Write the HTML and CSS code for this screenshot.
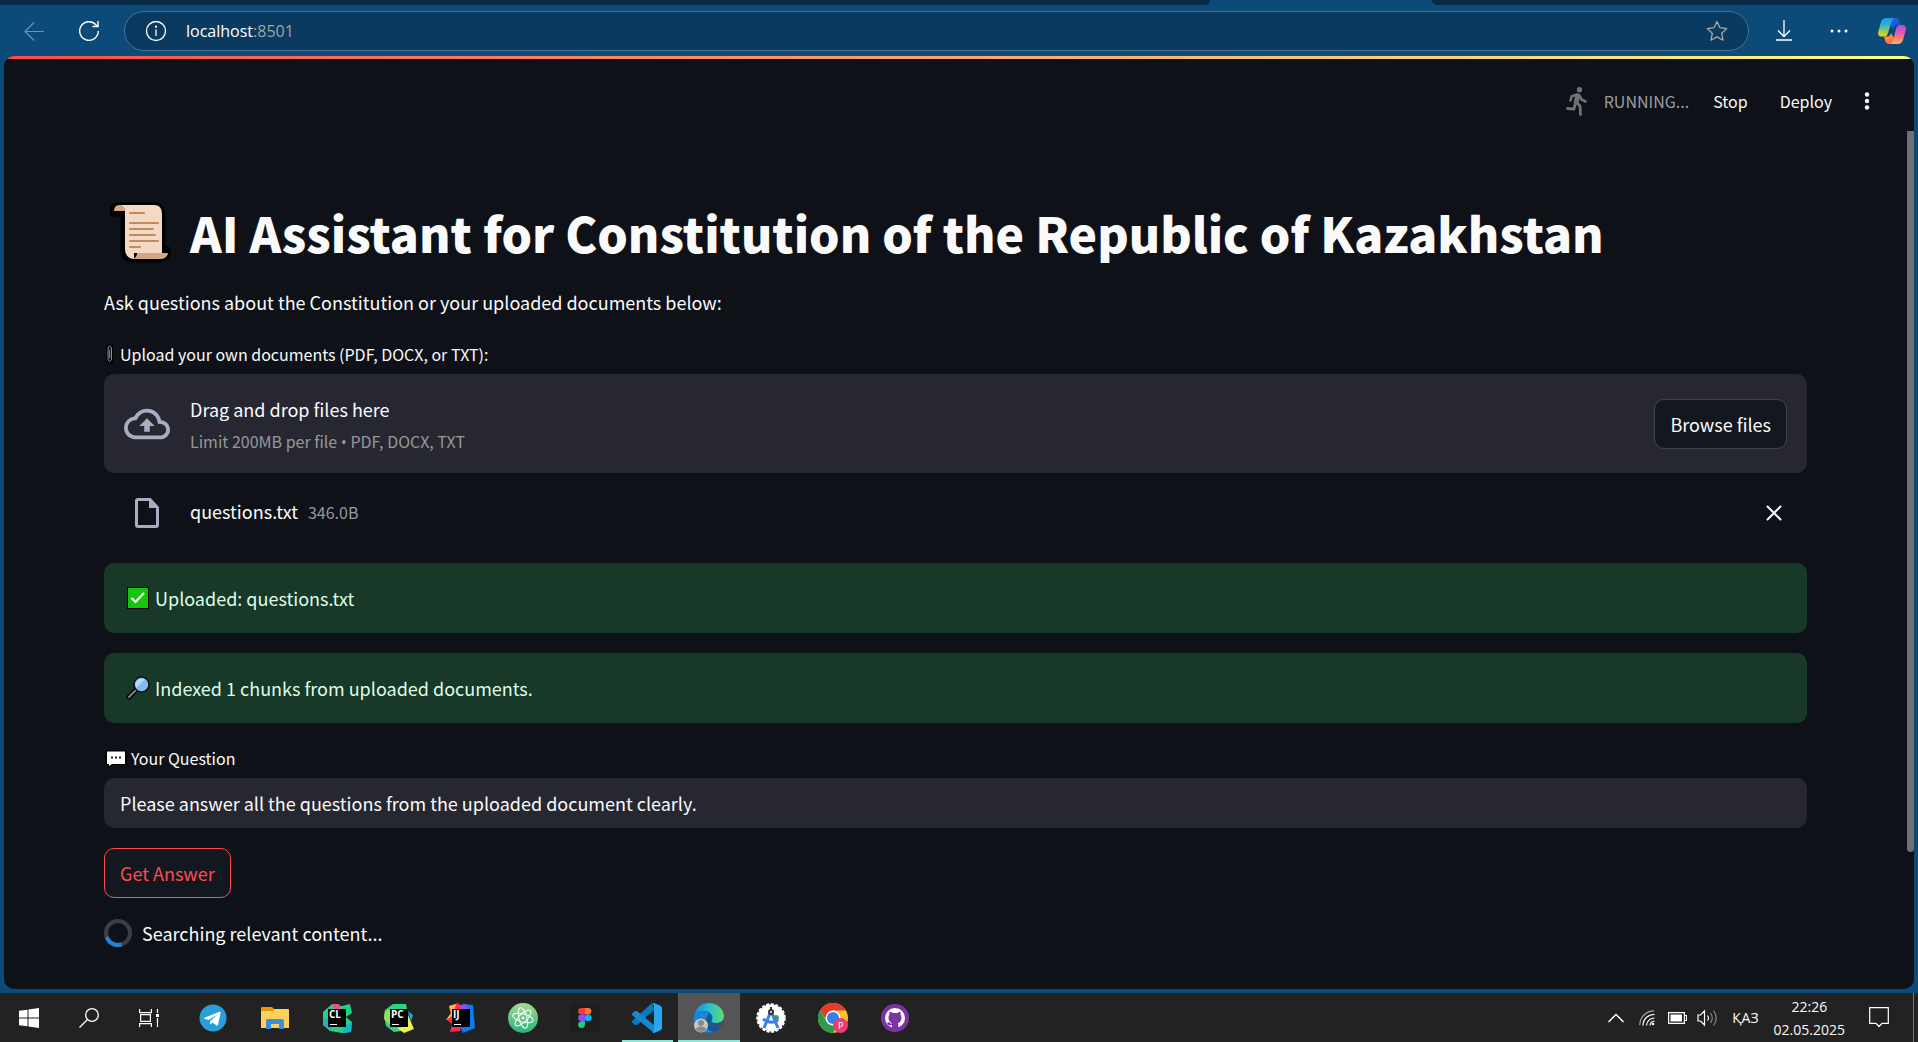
FILE: index.html
```html
<!DOCTYPE html>
<html lang="en">
<head>
<meta charset="utf-8">
<meta name="viewport" content="width=device-width, initial-scale=1">
<title>AI Assistant for Constitution of the Republic of Kazakhstan</title>
<link rel="stylesheet" href="styles.css">
</head>
<body>
<div class="tabstrip"><span class="tabs-left"></span><span class="tab-active"></span><span class="tabs-right"></span></div>
<nav class="toolbar" aria-label="Browser">
  <button class="icon-btn back" aria-label="Back"><svg width="20" height="20" viewBox="0 0 20 20" fill="none" stroke="#6e93b1" stroke-width="1.2"><path d="M20 10.500H1M10 1.500L1 10.500L10 19.500"/></svg></button>
  <button class="icon-btn reload" aria-label="Reload"><svg width="22" height="22" viewBox="0 0 22 22" fill="none" stroke="#fff" stroke-width="1.400"><path d="M20.300 11A9.300 9.300 0 1 1 17.800 4.700L20 6.500M20 1V6.500H14.500"/></svg></button>
  <div class="address">
    <svg width="22" height="22" viewBox="0 0 22 22" fill="none" stroke="#fff" stroke-width="1.300"><circle cx="11" cy="11" r="9.500"/><path d="M11 9.500V16"/><circle cx="11" cy="6.700" r=".5" fill="#fff"/></svg>
    <span class="url">localhost<span class="port">:8501</span></span>
    <button class="icon-btn star" aria-label="Add to favorites"><svg width="22" height="22" viewBox="0 0 22 22" fill="none" stroke="#a7a9aa" stroke-width="1.300" stroke-linejoin="round"><path d="M11 1.500L13.900 7.700L20.700 8.600L15.700 13.300L17 20.200L11 16.900L5 20.200L6.300 13.300L1.300 8.600L8.100 7.700Z"/></svg></button>
  </div>
  <button class="icon-btn download" aria-label="Downloads"><svg width="16" height="21" viewBox="0 0 16 21" fill="none" stroke="#fff" stroke-width="1.300"><path d="M8 0V16.500M2 10.500L8 16.500L14 10.500M0 20H16"/></svg></button>
  <button class="icon-btn more" aria-label="More"><svg width="18" height="4" viewBox="0 0 18 4" fill="#fff"><circle cx="2" cy="2" r="1.500"/><circle cx="9" cy="2" r="1.500"/><circle cx="16" cy="2" r="1.500"/></svg></button>
  <button class="icon-btn copilot" aria-label="Copilot"><svg width="28" height="26" viewBox="0 0 28 26">
    <defs>
      <linearGradient id="cpa" x1="0" y1="0" x2="0" y2="1"><stop offset="0" stop-color="#1b9bf0"/><stop offset=".4" stop-color="#35b5c5"/><stop offset=".75" stop-color="#a3cf45"/><stop offset="1" stop-color="#ffd000"/></linearGradient>
      <linearGradient id="cpb" x1="0" y1="0" x2="0" y2="1"><stop offset="0" stop-color="#a24df0"/><stop offset=".45" stop-color="#f25a9c"/><stop offset="1" stop-color="#ffb05a"/></linearGradient>
      <linearGradient id="cpc" x1="0" y1="0" x2="1" y2="1"><stop offset="0" stop-color="#1180e5"/><stop offset="1" stop-color="#2342cf"/></linearGradient>
      <linearGradient id="cpd" x1="0" y1="0" x2="1" y2="1"><stop offset="0" stop-color="#ffb02a"/><stop offset="1" stop-color="#ff4b4b"/></linearGradient>
    </defs>
    <path fill="url(#cpc)" d="M8 0H17Q20 0 21 3L22 7H19Q16 7 15 11Z"/>
    <path fill="url(#cpd)" d="M20 26H11Q8 26 7 22L6 18.500H9Q12 18.500 13 15Z"/>
    <path fill="url(#cpa)" d="M8 0H16Q14 1 13 5L10 15Q9 18.500 6 18.500H3Q-.5 18.500 .2 14L3 4Q4.500 0 8 0Z"/>
    <path fill="url(#cpb)" d="M22 7H25Q28.500 7.500 27.800 12L25 22Q23.500 26 20 26H12.500Q14.500 25 15.500 21L18 11Q19 7 22 7Z"/>
  </svg></button>
</nav>

<div class="viewport">
  <div class="decoration"></div>
  <header class="app-header">
    <div class="status">
      <svg width="21" height="29" viewBox="0 0 21 29" fill="none" stroke="#707276" stroke-linecap="round" stroke-linejoin="round"><circle cx="13.500" cy="2.700" r="2.700" fill="#707276" stroke="none"/><path stroke-width="2.600" d="M11 7.500L5.500 9.500L4.500 13.500M13 8L15.500 12.500L19.500 14.500"/><path stroke-width="5" d="M11.700 9L10.300 15"/><path stroke-width="2.800" d="M9.500 15.500L8 22L1.500 21.500M10 15L14 19L14.500 27.500"/></svg>
      <span class="running">RUNNING...</span>
    </div>
    <button class="text-btn stop">Stop</button>
    <button class="text-btn deploy">Deploy</button>
    <button class="icon-btn menu" aria-label="Main menu"><svg width="6" height="18" viewBox="0 0 6 18" fill="#fafafa"><circle cx="3" cy="2.500" r="2.200"/><circle cx="3" cy="9" r="2.200"/><circle cx="3" cy="15.500" r="2.200"/></svg></button>
  </header>
  <div class="scrollbar" aria-hidden="true"></div>

  <main class="content">
    <h1>
      <svg width="62" height="62" viewBox="0 0 62 62"><path d="M9 5H43Q52 5 52 14V49H57Q58 56 50 58H23Q14 58 14 49V12H3Q2 5 9 5Z" stroke="#000" stroke-width="7" stroke-linejoin="round"/><path fill="#f6d9c5" d="M8 4H44Q52 4 52 13V52H24V58Q15 57 15 48V10Q14 4 8 4Z"/><path fill="#d3a783" d="M4 10Q4 4 9.500 4Q15 5 15 10ZM27 52H58Q57 58 50 58H22Q27 57 27 52Z"/><path stroke="#bd8c5f" stroke-width="2" stroke-linecap="round" d="M20 12H34M20 22H48M20 28H43M20 34H45M20 40H48M20 46H30"/></svg>
      <span>AI Assistant for Constitution of the Republic of Kazakhstan</span>
    </h1>
    <p class="intro">Ask questions about the Constitution or your uploaded documents below:</p>

    <section class="uploader">
      <label class="field-label" for="browse">
        <svg width="16" height="20" viewBox="0 0 16 20" fill="none"><rect x="3" y="1" width="5" height="18" rx="2.500" stroke="#000" stroke-width="2"/><path d="M4 7V16Q5.500 19 7.500 16V4Q5.500 0 4 4V7M5.700 6V14" stroke="#8b8b8f"/></svg>
        <span>Upload your own documents (PDF, DOCX, or TXT):</span>
      </label>
      <div class="dropzone">
        <svg class="cloud" width="46" height="46" viewBox="0 0 24 24" fill="#a9adc1"><path d="M19.350 10.040A7.490 7.490 0 0 0 12 4C9.110 4 6.600 5.640 5.350 8.040A5.994 5.994 0 0 0 0 14c0 3.310 2.690 6 6 6h13c2.760 0 5-2.240 5-5 0-2.640-2.050-4.780-4.650-4.960zM19 18H6c-2.210 0-4-1.790-4-4 0-2.050 1.530-3.760 3.560-3.970l1.070-.11.5-.95A5.469 5.469 0 0 1 12 6c2.620 0 4.880 1.860 5.390 4.430l.3 1.500 1.530.11A2.980 2.980 0 0 1 22 15c0 1.650-1.350 3-3 3zM8 13h2.550v3h2.900v-3H16l-4-4z"/></svg>
        <div class="drop-text"><span>Drag and drop files here</span><small>Limit 200MB per file <span class="bullet">•</span> PDF, DOCX, TXT</small></div>
        <button class="btn" id="browse">Browse files</button>
      </div>
      <div class="file">
        <span class="file-icon"><svg width="24" height="30" viewBox="0 0 24 30" fill="none"><path d="M3 1.500H15L22.500 9.500V27Q22.500 28.500 21 28.500H3Q1.500 28.500 1.500 27V3Q1.500 1.500 3 1.500Z" stroke="#a9adc1" stroke-width="3"/><path fill="#a9adc1" d="M14 1L23 10H14Z"/></svg></span>
        <div class="file-name"><span>questions.txt</span><small>346.0B</small></div>
        <button class="icon-btn close" aria-label="Remove file"><svg width="16" height="16" viewBox="0 0 16 16" stroke="#fafafa" stroke-width="2" stroke-linecap="round"><path d="M1.500 1.500L14.500 14.500M14.500 1.500L1.500 14.500"/></svg></button>
      </div>
    </section>

    <div class="alert" role="status"><svg width="24" height="24" viewBox="0 0 24 24"><path d="M1 1H23V23H1Z" fill="#000"/><path fill="#16c60c" d="M2 2H22V22H2Z"/><path d="M5.500 12L9.500 16L18 7" fill="none" stroke="#fff" stroke-width="2.200"/></svg><span>Uploaded: questions.txt</span></div>
    <div class="alert" role="status"><svg width="24" height="24" viewBox="0 0 24 24" fill="none" stroke-linecap="round"><path d="M3 21L10.500 13.500" stroke="#000" stroke-width="5"/><path d="M3 21L10.500 13.500" stroke="#7c7f83" stroke-width="2.200"/><circle cx="15.500" cy="8.500" r="7.500" fill="#82bceb" stroke="#101216" stroke-width="1.600"/><path d="M10.500 12A6 6 0 0 1 18.500 3.500Z" fill="#b5daf5"/></svg><span>Indexed 1 chunks from uploaded documents.</span></div>

    <div class="question">
      <label class="field-label" for="question"><svg class="bubble" width="24" height="20" viewBox="0 0 24 20"><path fill="#000" d="M1 2H23V17H9L4 20V17H1Z"/><path fill="#fff" d="M3 3.500H21V16H8L5 18V16H3Z"/><path stroke="#222" stroke-width="2" stroke-dasharray="2 2" d="M7 9.500H17"/></svg><span>Your Question</span></label>
      <input id="question" type="text" value="Please answer all the questions from the uploaded document clearly.">
    </div>
    <button class="btn primary">Get Answer</button>
    <div class="searching"><svg width="28" height="28" viewBox="0 0 28 28" fill="none" stroke-width="4"><circle cx="14" cy="14" r="12" stroke="#3c3e43"/><path d="M2.600 18A12 12 0 0 0 17.500 25.500" stroke="#1c83e1"/></svg><span>Searching relevant content...</span></div>
  </main>
</div>

<footer class="taskbar">
  <div class="system">
    <button class="task" aria-label="Start"><svg width="20" height="20" viewBox="0 0 20 20" fill="#fff"><path d="M0 2.800L8.500 1.700V9.500H0ZM9.500 1.500L20 0V9.500H9.500ZM0 10.500H8.500V18.300L0 17.200ZM9.500 10.500H20V20L9.500 18.500Z"/></svg></button>
    <button class="task" aria-label="Search"><svg width="20" height="20" viewBox="0 0 20 20" fill="none" stroke="#fff" stroke-width="1.300"><circle cx="13" cy="7" r="6.300"/><path d="M8.500 11.500L.5 19.500"/></svg></button>
    <button class="task" aria-label="Task view"><svg width="20" height="20" viewBox="0 0 20 20" fill="none" stroke="#fff" stroke-width="1.200"><path d="M.6 1V4.600H12.400V1M1.600 6.600H11.400V13.400H1.600ZM.6 19V15.600H12.400V19M18.500 1V5M18.500 10V19"/><path fill="#fff" stroke="none" d="M17 6H20V9H17Z"/></svg></button>
  </div>
  <div class="apps">
    <button class="task" aria-label="Telegram"><svg width="28" height="28" viewBox="0 0 28 28"><circle cx="14" cy="14" r="13.500" fill="#289fd9"/><path fill="#fff" d="M5.500 13.700L20.500 7.800Q22 7.500 21.600 9L19 21Q18.500 22 17.500 21.500L13.500 18.500L11.500 20.300Q11 20.500 11 19.700L11.300 17L18.500 10.500L9.700 16L6 15Q4.500 14.500 5.500 13.700Z"/></svg></button>
    <button class="task" aria-label="File Explorer"><svg width="28" height="24" viewBox="0 0 28 24"><path fill="#e39a06" d="M0 2Q0 1 1 1H11L13 3H15V8H0Z"/><path fill="#ffd05a" d="M0 5H12L14 3H27Q28 3 28 4V22H0Z"/><path fill="#3a8fdd" d="M5 23V15Q5 13 7 13H21Q23 13 23 15V23H18V18H10V23Z"/></svg></button>
    <button class="task" aria-label="CLion"><svg width="30" height="30" viewBox="0 0 30 30"><path fill="#24cf87" d="M1 9L10 1L20 3L28 1L30 10L24 14L30 19L29 29L20 30L8 28L1 22Z"/><path fill="#ee4e8c" d="M10 1L17 1L19 7L12 6Z"/><path fill="#16b4c9" d="M1 16L6 16L10 27L1 22ZM22 24L30 19L29 29L20 30Z"/><path d="M6 6H24V24H6Z"/><path fill="#fff" d="M8 21H15V22H8Z"/><text x="7" y="15" class="logo">CL</text></svg></button>
    <button class="task" aria-label="PyCharm"><svg width="30" height="30" viewBox="0 0 30 30"><path fill="#2ad586" d="M1 7L9 1L22 1L24 10L25 27L10 29L2 23L0 13Z"/><path fill="#95e052" d="M1 8L8 6L6 22L0 16Z"/><path fill="#eff04b" d="M24 12L30 26L20 30L13 25L24 23Z"/><path fill="#18a5ee" d="M24 8L29 12L27 19Z"/><path d="M6 6H24V24H6Z"/><path fill="#fff" d="M8 21H15V22H8Z"/><text x="7" y="15" class="logo">PC</text></svg></button>
    <button class="task" aria-label="IntelliJ IDEA"><svg width="30" height="30" viewBox="0 0 30 30"><path fill="#087cfa" d="M17 1L27 2L29 25L17 30L12 20Z"/><path fill="#fe2857" d="M3 3L12 0L19 7L14 28L4 29L6 21L0 16L5 12Z"/><path fill="#ffb14a" d="M3 3L10 1L8 9L5 14L0 17L5 10Z"/><path fill="#9150e8" d="M14 2L20 1L24 8L15 8Z"/><path d="M6 6H24V24H6Z"/><path fill="#fff" d="M8 21H15V22H8Z"/><text x="7" y="15" class="logo">IJ</text></svg></button>
    <button class="task" aria-label="Atom"><svg width="30" height="30" viewBox="0 0 30 30" fill="none" stroke="#fff"><defs><linearGradient id="atom" x2="0" y2="1"><stop stop-color="#a5dc91"/><stop offset="1" stop-color="#27b17c"/></linearGradient></defs><circle cx="15" cy="15" r="15" fill="url(#atom)" stroke="none"/><ellipse cx="15" cy="15" rx="10.500" ry="4" transform="rotate(15 15 15)"/><ellipse cx="15" cy="15" rx="10.500" ry="4" transform="rotate(75 15 15)"/><ellipse cx="15" cy="15" rx="10.500" ry="4" transform="rotate(135 15 15)"/><circle cx="15" cy="15" r="1" fill="#fff"/></svg></button>
    <button class="task" aria-label="Figma"><svg width="30" height="30" viewBox="0 0 30 30"><path fill="#1e1e1e" d="M0 0H30V30H0Z"/><path fill="#ff3737" d="M15 5H11.500A3.300 3.300 0 0 0 11.500 11.600H15Z"/><path fill="#ff7237" d="M15 5H18A3.300 3.300 0 0 1 18 11.600H15Z"/><path fill="#874fff" d="M15 11.600H11.500A3.300 3.300 0 0 0 11.500 18.200H15Z"/><circle cx="18.200" cy="14.900" r="3.300" fill="#00b6ff"/><path fill="#24cb71" d="M15 18.200H11.500A3.400 3.400 0 1 0 15 21.600Z"/></svg></button>
    <button class="task open" aria-label="Visual Studio Code"><svg width="30" height="30" viewBox="0 0 30 30"><path fill="#0879bd" d="M22 7L5 22L3 22L0 19.500V18L20 0Z"/><path fill="#1787ce" d="M0 10.500L3 8H5L22 22V30L0 12Z"/><path fill="#29a7f0" d="M22 0L28 2.500Q30 3.500 30 5V25Q30 26.500 28 27.500L22 30L20 29Q22 29 22 27V3Q22 1 20 .8Z"/></svg></button>
    <button class="task current" aria-label="Microsoft Edge"><svg width="30" height="30" viewBox="0 0 30 30"><defs><linearGradient id="edge"><stop stop-color="#1689d8"/><stop offset=".5" stop-color="#27bdd8"/><stop offset="1" stop-color="#63df62"/></linearGradient></defs><circle cx="15" cy="15" r="15" fill="#0c59a4"/><path fill="url(#edge)" d="M0 14C1 5 7 0 15 0C24 0 30 7 30 13C30 18 26 20 22 20C18 20 17 18.500 18 17C20 12 15 8 9 8C5 8 1 11 0 14Z"/><path fill="#1986d7" d="M0 14C2 8 8 7 13 9C17 11 12 13 11 18C10 24 14 28 20 29C7 32 -1 24 0 14Z"/><path fill="#54504f" d="M17 12Q11 15 14 20Q19 25 27 21L30 18V22Q24 25 19 24Q11 21 12 15Z"/><circle cx="7" cy="22.500" r="7" fill="#c8c6c4"/><circle cx="7" cy="20" r="3" fill="#8c8987"/><path fill="#8c8987" d="M2 27Q2 23.500 7 23.500Q12 23.500 12 27Q7 31 2 27Z"/></svg></button>
    <button class="task" aria-label="Android Studio"><svg width="30" height="30" viewBox="0 0 30 30"><circle cx="15" cy="15" r="13.500" fill="#fff" stroke="#fff" stroke-width="2.500" stroke-dasharray="3 1.500"/><circle cx="20" cy="15" r="3" fill="#35a853"/><path fill="none" stroke="#3f7ee9" stroke-width="3" d="M8 25L15 8L22 25M7 16Q15 22 22 17"/><circle cx="15" cy="9" r="2" fill="#fff" stroke="#333" stroke-width="2"/><path stroke="#333" stroke-width="2" d="M15 4V7"/></svg></button>
    <button class="task" aria-label="Chrome"><svg width="30" height="30" viewBox="0 0 30 30"><circle cx="15" cy="15" r="15" fill="#fbc02d"/><path fill="#e33b2e" d="M2 7.500A15 15 0 0 1 28 7.500H15L9 18Z"/><path fill="#2d9b4b" d="M2 7.500A15 15 0 0 0 15 30L21 19H9Z"/><circle cx="15" cy="15" r="7.500" fill="#fff"/><circle cx="15" cy="15" r="6" fill="#377ee8"/><circle cx="22.500" cy="22.500" r="7.500" fill="#e83e75"/><text x="20" y="26" class="badge">P</text></svg></button>
    <button class="task" aria-label="GitHub Desktop"><svg width="30" height="30" viewBox="0 0 30 30"><circle cx="15" cy="15" r="14" fill="#7b35a3"/><circle cx="15" cy="15" r="10" fill="#fff"/><path fill="#7b35a3" d="M12 25V22Q8 23 7 19.500Q9 18.500 10.500 20.500H12.300Q8.500 19 8.500 14.500Q8.500 12.500 9.500 11.500Q9.200 10 9.800 8.500L13 10H17L20.200 8.500Q20.800 10 20.500 11.500Q21.500 12.500 21.500 14.500Q21.500 19 17.700 20.500Q18.500 21 18.500 25Z"/></svg></button>
  </div>
  <div class="tray">
    <button class="icon-btn chevron" aria-label="Show hidden icons"><svg width="16" height="10" viewBox="0 0 16 10" fill="none" stroke="#fff" stroke-width="1.500"><path d="M.5 9L8 1.500L15.500 9"/></svg></button>
    <svg class="wifi" width="16" height="16" viewBox="0 0 16 16" fill="none" stroke="#fff" stroke-width="1.200"><path stroke="#aaa" d="M.7 15A14.300 14.300 0 0 1 15 .8"/><path d="M4 15.500A11 11 0 0 1 15.500 4.500M7.500 15.500A8 8 0 0 1 15.500 8M11 15.500A5 5 0 0 1 15.500 11"/><circle cx="14" cy="14" r="1.300" fill="#fff" stroke="none"/></svg>
    <svg class="battery" width="19" height="12" viewBox="0 0 19 12" fill="#fff"><path d="M.6 .6H16.400V11.400H.6ZM17 3.500H18.500V8.500H17" fill="none" stroke="#fff" stroke-width="1.200"/><path d="M2.500 2.500H14V9.500H2.500Z"/></svg>
    <svg class="volume" width="21" height="18" viewBox="0 0 21 18" fill="none" stroke="#fff" stroke-width="1.200"><path d="M1 6H3.500L7.500 2V16L3.500 12H1ZM10.500 6.500Q12.500 9 10.500 11.500"/><path stroke="#888" d="M13.500 4Q17 9 13.500 14M16.500 1.500Q22 9 16.500 16.500"/></svg>
    <span class="language">ҚАЗ</span>
    <div class="clock"><time>22:26</time><time>02.05.2025</time></div>
    <button class="icon-btn notifications" aria-label="Notifications"><svg width="20" height="21" viewBox="0 0 20 21" fill="none" stroke="#fff" stroke-width="1.200"><path d="M.7 .7H19.300V16.300H13L10 19.500L7 16.300H.7Z"/></svg></button>
  </div>
</footer>
</body>
</html>
```
FILE: styles.css
```css
* { box-sizing: border-box; }
body {
  margin: 0;
  min-height: 100vh;
  display: flex;
  flex-direction: column;
  background: #0c4a7a;
  color: #fafafa;
  font: 18px/30px "Noto Sans CJK SC", "Noto Sans CJK JP", sans-serif;
}
button { font: inherit; color: inherit; cursor: pointer; }
svg { display: block; flex: none; }
.icon-btn { display: flex; flex: none; padding: 0; border: 0; background: none; }

/* Browser chrome */
.tabstrip { display: flex; height: 5px; background: #0c4a7a; }
.tabs-left, .tabs-right { background: #072a46; }
.tabs-left { flex: 1210; border-bottom-right-radius: 6px; }
.tab-active { flex: 222; }
.tabs-right { flex: 486; border-bottom-left-radius: 6px; }
.toolbar { display: flex; align-items: center; height: 51px; padding: 0 12px 0 24px; }
.reload { margin: 0 24px 0 34px; }
.address {
  flex: 1;
  display: flex;
  align-items: center;
  height: 40px;
  padding: 0 20px;
  border: 1px solid #4a7291;
  border-radius: 20px;
  background: #0a3a60;
}
.url { margin-left: 19px; font: 16px/24px "Open Sans", sans-serif; color: #fff; }
.port { color: #a0a3a5; }
.star { margin-left: auto; }
.download { margin: 0 38px 0 27px; }
.copilot { margin-left: 30px; }

/* App page */
.viewport {
  position: relative;
  flex: 1;
  margin: 0 4px 4px;
  border-radius: 10px;
  overflow: hidden;
  background: #0e1117;
}
.decoration { height: 3px; background: linear-gradient(90deg, #ff4b4b, #fffd80); }
.app-header {
  display: flex;
  align-items: center;
  justify-content: flex-end;
  height: 72px;
  padding: 12px 44px 0 0;
  font-size: 16px;
}
.status { display: flex; align-items: center; gap: 17px; }
.running { color: #9c9da1; }
.text-btn { padding: 0; border: 0; background: none; }
.stop { margin-left: 24px; }
.deploy { margin: 0 32px; }
.scrollbar {
  position: absolute;
  top: 75px;
  right: 0;
  bottom: 137px;
  width: 7px;
  border-radius: 0 0 4px 4px;
  background: #6f7073;
}
.content {
  display: flex;
  flex-direction: column;
  gap: 20px;
  padding: 66px 107px 40px 100px;
}
h1 {
  display: flex;
  align-items: center;
  gap: 18px;
  margin: 0;
  padding-left: 6px;
  font-size: 48px;
  line-height: 70px;
  font-weight: 900;
}
.intro { margin: 0; padding-bottom: 2px; }
.field-label {
  display: flex;
  align-items: center;
  margin-bottom: 5px;
  font-size: 16px;
}
.bubble { margin-right: 3px; }
.dropzone {
  display: flex;
  align-items: center;
  gap: 20px;
  padding: 19px 20px;
  border-radius: 10px;
  background: #262730;
}
.drop-text { display: flex; flex-direction: column; gap: 4px; padding-top: 1px; }
small { font-size: 16px; line-height: 26px; color: #97989d; }
.bullet { font-family: "Open Sans", sans-serif; line-height: 1; }
.btn {
  height: 50px;
  padding: 0 15px;
  border: 1px solid #41444c;
  border-radius: 10px;
  background: #131720;
}
.dropzone .btn { margin-left: auto; }
.file { display: flex; align-items: center; height: 50px; margin: 15px 0 5px; padding: 0 25px 0 20px; }
.file-icon { display: flex; justify-content: center; width: 46px; margin-right: 20px; }
.file-name { display: flex; align-items: baseline; gap: 10px; padding-bottom: 4px; }
.close { margin-left: auto; }
.alert {
  display: flex;
  align-items: center;
  gap: 5px;
  padding: 20px 22px;
  border-radius: 10px;
  background: #183828;
  color: #dffde9;
}
.question { display: flex; flex-direction: column; }
.question input {
  height: 50px;
  padding: 0 16px;
  border: 0;
  border-radius: 10px;
  background: #262730;
  color: inherit;
  font: inherit;
}
.primary { align-self: flex-start; border-color: #ff4b4b; color: #ff4b4b; }
.searching { display: flex; align-items: center; gap: 10px; }

/* Taskbar */
.taskbar { display: flex; height: 49px; background: #222; font: 14px/23px "Open Sans", sans-serif; }
.system, .apps { display: flex; }
.task {
  display: flex;
  align-items: center;
  justify-content: center;
  width: 62px;
  padding: 1px 0 0;
  border: 0;
  background: none;
}
.system .task { width: 60px; padding-right: 2px; }
.apps { margin-left: 2px; }
.open { background: linear-gradient(#8ee8d8, #8ee8d8) center bottom / 51px 2px no-repeat; }
.current { background: #555; box-shadow: inset 0 -2px #8ee8d8; }
.logo { font: 700 10px "Open Sans", sans-serif; fill: #fff; }
.badge { font: 9px "Open Sans", sans-serif; fill: #fff; }
.tray { display: flex; align-items: center; margin-left: auto; padding-right: 4px; }
.wifi { margin-left: 15px; }
.battery { margin: 0 10px 0 13px; }
.language { margin-left: 14px; }
.clock { display: flex; flex-direction: column; align-items: center; margin: 0 24px 0 15px; }
.notifications { margin-right: 24px; }
.tray::after { content: ""; align-self: stretch; width: 1px; background: #777; }
```
